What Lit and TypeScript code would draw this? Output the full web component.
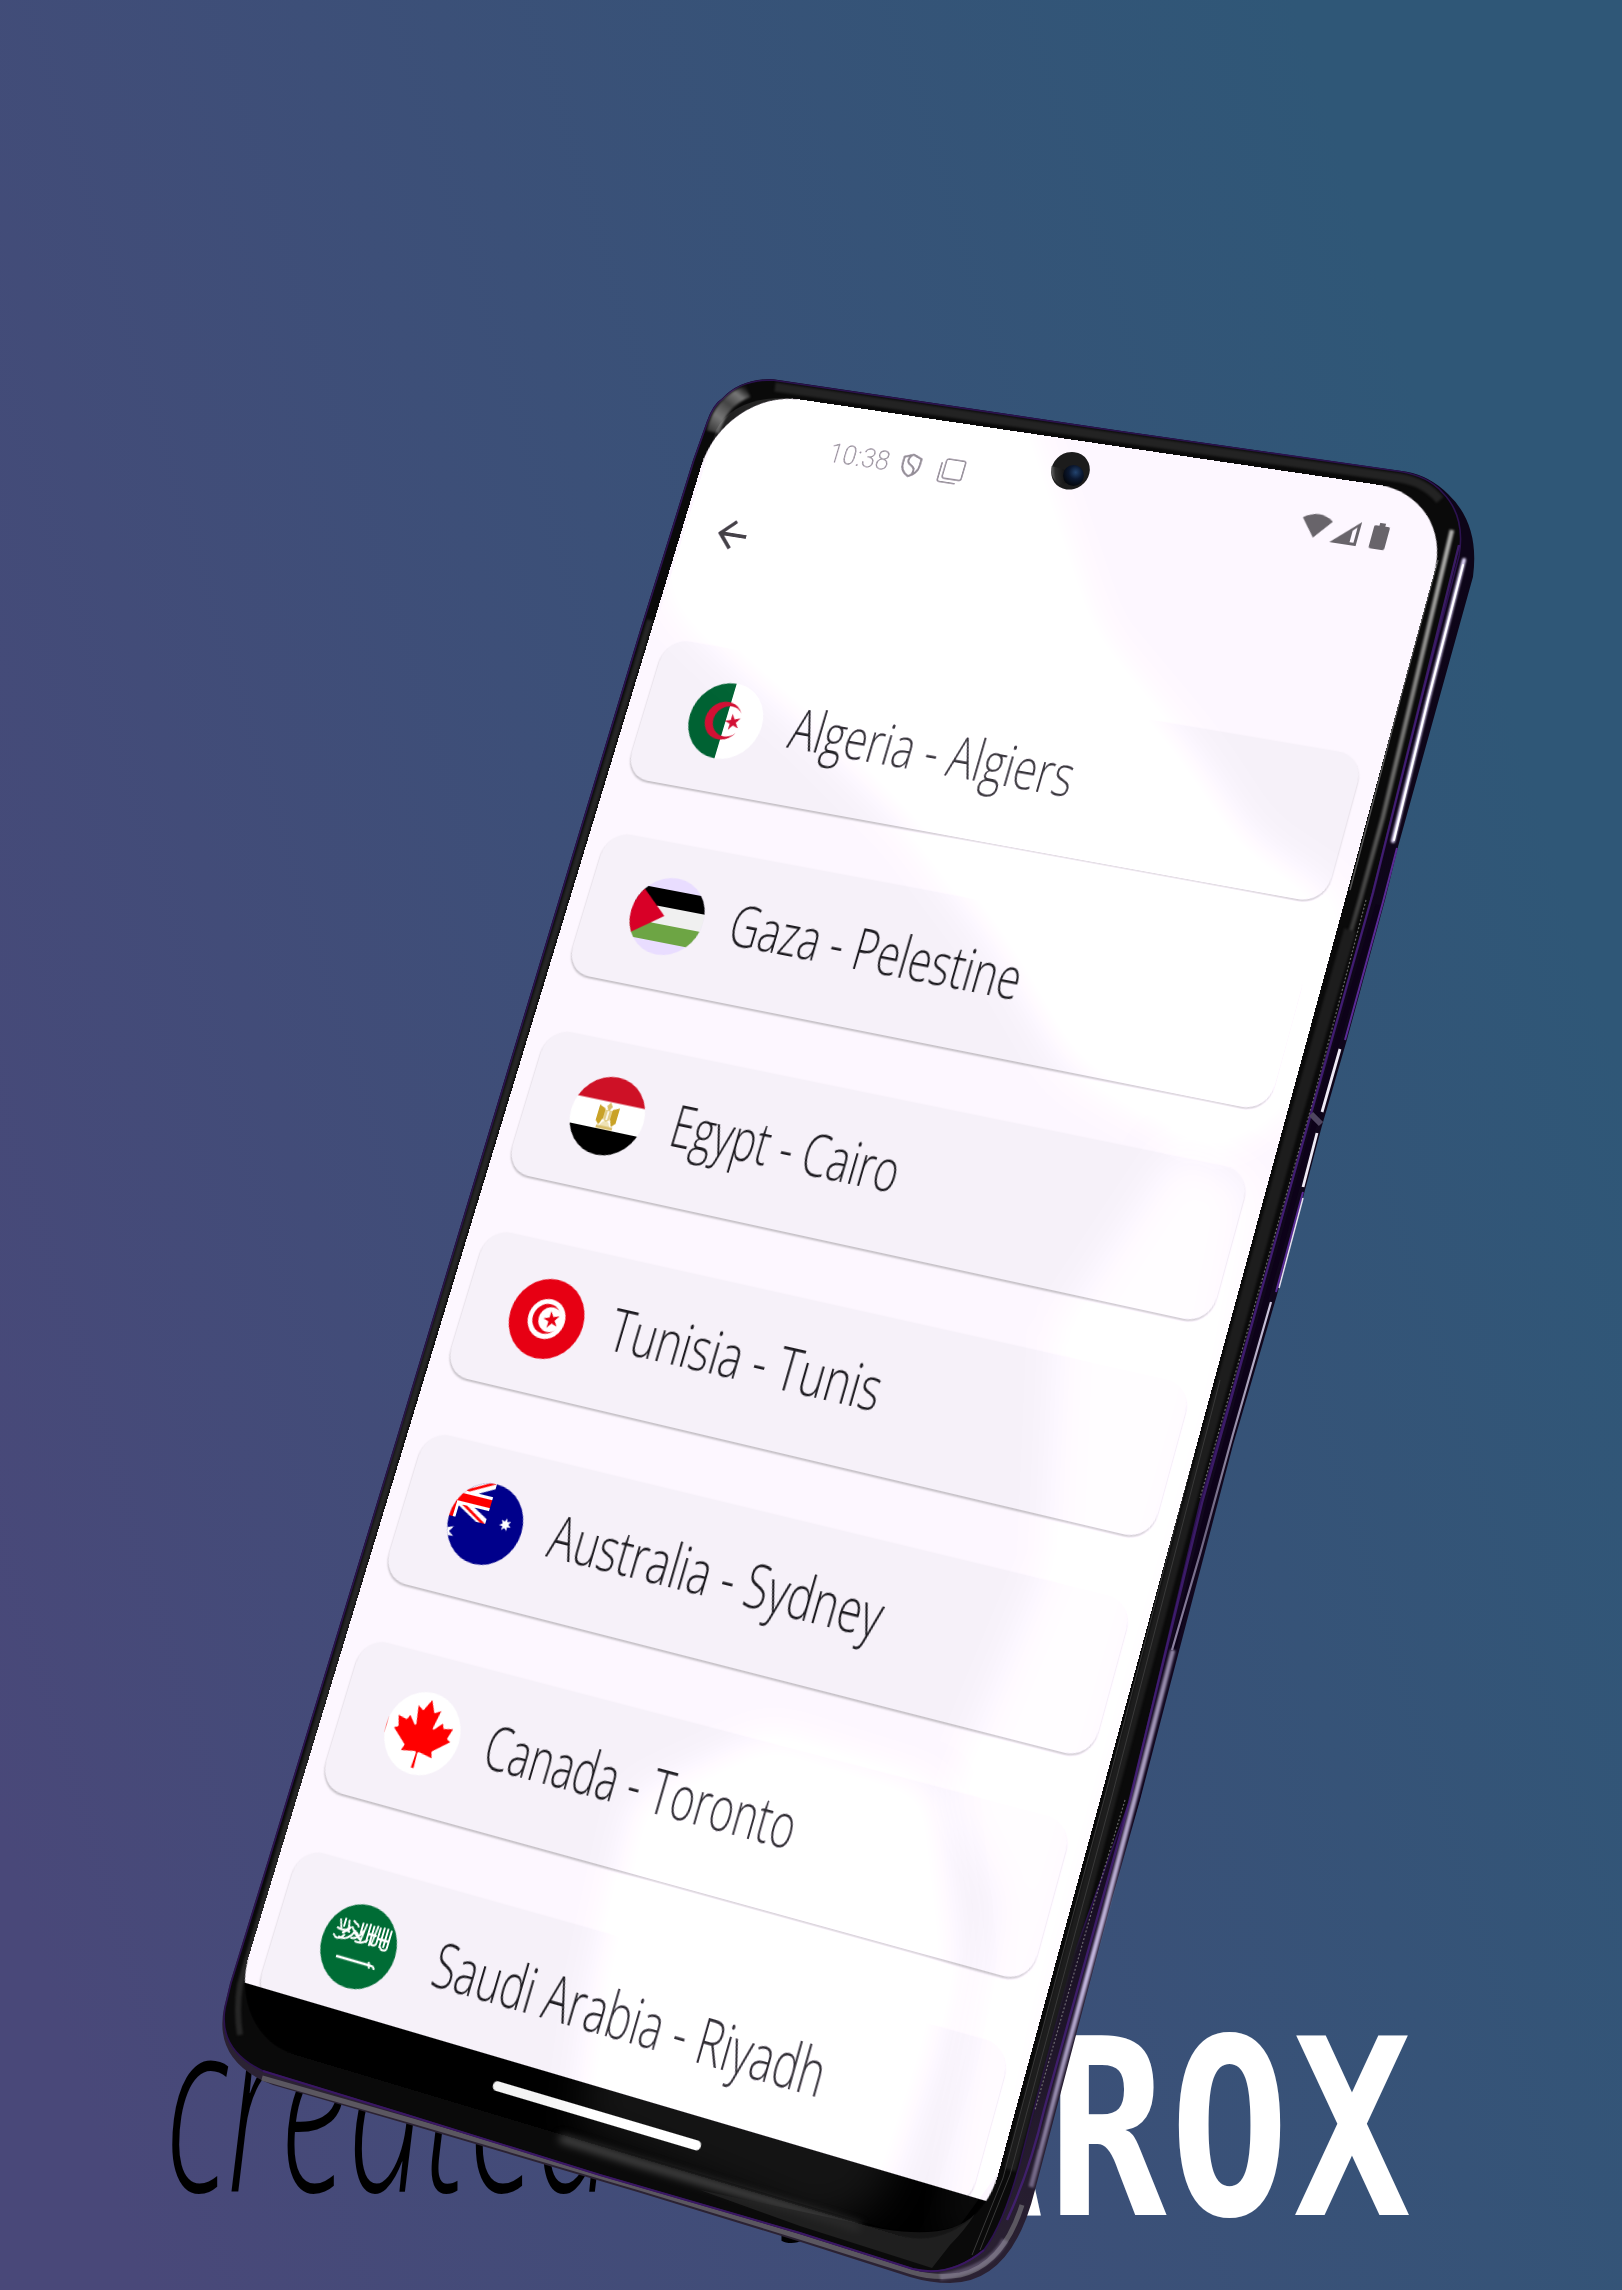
import { LitElement, html, svg, css, SVGTemplateResult } from 'lit';
import { customElement, property } from 'lit/decorators.js';
import { styleMap } from 'lit/directives/style-map.js';

type Pt = [number, number];

const SCREEN_W = 786;
const APP_H = 1660;

/** Projects a flat w×h rectangle onto the quad TL, TR, BR, BL. */
function project(w: number, h: number, q: [Pt, Pt, Pt, Pt]): string {
  const [[x0, y0], [x1, y1], [x2, y2], [x3, y3]] = q;
  const dx1 = x1 - x2, dx2 = x3 - x2, dx3 = x0 - x1 + x2 - x3;
  const dy1 = y1 - y2, dy2 = y3 - y2, dy3 = y0 - y1 + y2 - y3;
  const den = dx1 * dy2 - dx2 * dy1;
  const g = (dx3 * dy2 - dx2 * dy3) / den;
  const k = (dx1 * dy3 - dx3 * dy1) / den;
  const m = [
    (x1 - x0 + g * x1) / w, (y1 - y0 + g * y1) / w, 0, g / w,
    (x3 - x0 + k * x3) / h, (y3 - y0 + k * y3) / h, 0, k / h,
    0, 0, 1, 0,
    x0, y0, 0, 1,
  ];
  return `matrix3d(${m.map((n) => n.toFixed(9)).join(',')})`;
}

const TILT = project(SCREEN_W, APP_H, [
  [724.8, 388.4],
  [1455, 496.1],
  [990.5, 2202.3],
  [241.1, 1981.6],
]);

function star(cx: number, cy: number, r: number, n = 5, inner = 0.38, rot = -90): string {
  const pts: string[] = [];
  for (let i = 0; i < n * 2; i++) {
    const a = ((rot + (i * 180) / n) * Math.PI) / 180;
    const rr = i % 2 ? r * inner : r;
    pts.push(`${(cx + rr * Math.cos(a)).toFixed(2)},${(cy + rr * Math.sin(a)).toFixed(2)}`);
  }
  return pts.join(' ');
}

const FLAGS: Record<string, SVGTemplateResult> = {
  dz: svg`<rect width="40" height="80" fill="#006233"/><rect x="40" width="40" height="80" fill="#fff"/>
    <path d="M54.5 29.5A20 20 0 1 0 54.5 50.500A16 16 0 1 1 54.500 29.500Z" fill="#d21034"/>
    <polygon points=${star(48, 40, 9, 5, 0.38, 180)} fill="#d21034"/>`,
  ps: svg`<rect width="80" height="80" fill="#e9ddff"/>
    <rect y="13" width="80" height="18" fill="#000"/><rect y="31" width="80" height="18" fill="#f0f0f0"/>
    <rect y="49" width="80" height="18" fill="#6da544"/><path d="M0 10L37 40L0 67Z" fill="#d80027"/>`,
  eg: svg`<rect width="80" height="80" fill="#fff"/><rect width="80" height="25.500" fill="#ce1126"/>
    <rect y="54" width="80" height="26" fill="#000"/>
    <g fill="#c9a227"><path d="M29 30l7 3v10l-3 7-4-4z"/><path d="M51 30l-7 3v10l3 7 4-4z"/>
    <path d="M40 26l3 4-2 4h-2l-2-4z" opacity=".7"/><path d="M36 34h8v9l-4 4-4-4z" fill="#e3cf8c"/>
    <rect x="39.200" y="35" width="1.600" height="9" fill="#fff"/><path d="M37 46h6l3 5H34z" fill="#efe2b5"/><rect x="31" y="50.500" width="18" height="3" fill="#d8bd6a"/></g>`,
  tn: svg`<rect width="80" height="80" fill="#e70013"/><circle cx="40" cy="40" r="20" fill="#fff"/>
    <circle cx="40" cy="40" r="15" fill="#e70013"/><circle cx="44" cy="40" r="12.500" fill="#fff"/>
    <polygon points=${star(45.5, 40, 9, 5, 0.38, 180)} fill="#e70013"/>`,
  au: svg`<rect width="80" height="80" fill="#00008b"/>
    <svg x="-40" y="0" width="80" height="40" viewBox="0 0 80 40">
      <path d="M0 0L80 40M80 0L0 40" stroke="#fff" stroke-width="9"/>
      <path d="M40 20L80 41.500M40 18.500L80 -1.500M40 20L0 -1.500M40 20L0 41.500" stroke="#f00" stroke-width="2.600"/>
      <path d="M40 0V40M0 20H80" stroke="#fff" stroke-width="14"/>
      <path d="M40 0V40M0 20H80" stroke="#f00" stroke-width="8"/></svg>
    <polygon points=${star(0, 56, 11, 7, 0.45)} fill="#fff"/>
    <polygon points=${star(61, 36, 6.5, 7, 0.5)} fill="#fff"/>`,
  ca: svg`<rect width="80" height="80" fill="#fff"/>
    <path transform="translate(-40 0) scale(.016667)" fill="#f00" d="m4890 4430-45-863a95 95 0 0 1 111-98l859 151-116-320a65 65 0 0 1 20-73l941-762-212-99a65 65 0 0 1-34-79l186-572-542 115a65 65 0 0 1-73-38l-105-247-423 454a65 65 0 0 1-111-57l204-1052-327 189a65 65 0 0 1-91-27l-332-652-332 652a65 65 0 0 1-91 27l-327-189 204 1052a65 65 0 0 1-111 57l-423-454-105 247a65 65 0 0 1-73 38l-542-115 186 572a65 65 0 0 1-34 79l-212 99 941 762a65 65 0 0 1 20 73l-116 320 859-151a95 95 0 0 1 111 98l-45 863z"/>
    <path d="M0 32v16" stroke="#f00" stroke-width="1"/>`,
  sa: svg`<rect width="80" height="80" fill="#006c35"/>
    <g fill="none" stroke="#fff" stroke-width="2" stroke-linecap="round">
      <path d="M11 35c3 4 8 3 11-2M14 20l3 8M19 18v7M23 19l2 9M13 28c5 2 9-1 13 1M17 36c6 2 12-2 15-9"/>
      <path d="M28 18c3 3 5 1 6 4M28 24c3 5 7 2 9 8M30 34c4 0 8-3 11-10M38 18v9M42 18l-2 16M35 36c5 1 9-1 12-4"/>
      <path d="M46 17v17M50 18v18M54 17l-2 18M57 18v14c0 4-5 4-6 2M61 17v18M65 17v17M69 18v16c0 4-6 4-7 1"/>
      <path d="M47 26h7M59 28h8M33 29l6 4M20 31l6-6" stroke-width="2.600"/></g>
    <path d="M20 54h38" stroke="#fff" stroke-width="2.600"/><path d="M55 51l2 6M58 54c3 0 4 1 4 3" stroke="#fff" stroke-width="2" fill="none"/>`,
};

@customElement('city-card')
class CityCard extends LitElement {
  @property() flag = '';
  @property() label = '';
  @property({ type: Number }) start = 0;
  @property({ type: Number }) span = 0;

  static styles = css`
    :host { display: block; flex: none; }
    .card {
      display: flex; align-items: center; height: 150px; box-sizing: border-box;
      padding-left: 50px; border-radius: 26px; background: #f6f1f9;
      box-shadow: 0 2px 2px rgba(0, 0, 0, 0.2), 0 1px 3px rgba(0, 0, 0, 0.06);
    }
    .avatar { width: 80px; height: 80px; border-radius: 50%; flex: none; margin-right: 27px; overflow: hidden; }
    .name { flex: 1; height: 150px; overflow: visible; }
    text { font-family: 'Open Sans', 'Noto Sans', sans-serif; font-weight: 300; font-size: 58px; fill: #1d1b20; }
  `;

  render() {
    return html`<div class="card">
      <svg class="avatar" viewBox="0 0 80 80">${FLAGS[this.flag]}</svg>
      <svg class="name"><text x=${this.start} y="91" textLength=${this.span} lengthAdjust="spacingAndGlyphs">${this.label}</text></svg>
    </div>`;
  }
}

@customElement('app-root')
class AppRoot extends LitElement {
  static styles = css`
    :host { display: block; }
    .stage {
      position: relative; width: 1622px; height: 2290px; overflow: hidden; isolation: isolate;
      background: linear-gradient(73deg, rgb(73, 72, 121) 6%, rgb(47, 87, 119) 86%);
    }
    .layer { position: absolute; left: 0; top: 0; width: 1622px; height: 2290px; display: block; }
    .glare { mix-blend-mode: plus-lighter; }
    .hand { font-family: 'Open Sans', sans-serif; font-style: italic; font-weight: 300; fill: #000; }
    .mark { font-family: 'DejaVu Sans Mono', monospace; font-weight: 700; fill: #fff; }
    .screen {
      position: absolute; left: 0; top: 0; width: 786px; height: 1711px;
      transform-origin: 0 0; border-radius: 86px 78px 76px 76px; overflow: hidden;
      display: flex; flex-direction: column; background: #000;
    }
    .app {
      height: 1660px; flex: none; display: flex; flex-direction: column; overflow: hidden; background: #fdf7ff;
    }
    .status { display: flex; align-items: center; height: 102px; flex: none; padding: 0 55px 0 134px; }
    .status .spacer { flex: 1; }
    .time { width: 67px; height: 30px; overflow: visible; }
    .time text { font-family: Roboto, sans-serif; font-size: 30px; font-weight: 300; fill: #77727a; }
    .shield { width: 24px; height: 27px; margin-left: 12px; }
    .copy { width: 29px; height: 29px; margin-left: 18px; }
    .wifi { width: 31px; height: 26px; }
    .signal { width: 27px; height: 26px; margin: 4px 0 0 2px; }
    .battery { width: 16px; height: 27px; margin-left: 13px; }
    .toolbar { display: flex; align-items: center; height: 102px; flex: none; padding-left: 32px; }
    .back { width: 48px; height: 48px; }
    .list { display: flex; flex-direction: column; gap: 58.7px; padding: 66.600px 19px 0 19px; }
    .nav { flex: 1; display: flex; align-items: center; justify-content: center; }
    .pill { width: 218px; height: 9px; border-radius: 5px; background: #f4f4f4; }
  `;

  private cities = [
    { flag: 'dz', label: 'Algeria - Algiers', from: 181, to: 486 },
    { flag: 'ps', label: 'Gaza - Pelestine', from: 179, to: 491 },
    { flag: 'eg', label: 'Egypt - Cairo', from: 180, to: 424 },
    { flag: 'tn', label: 'Tunisia - Tunis', from: 179, to: 468 },
    { flag: 'au', label: 'Australia - Sydney', from: 180, to: 532 },
    { flag: 'ca', label: 'Canada - Toronto', from: 178, to: 506 },
    { flag: 'sa', label: 'Saudi Arabia - Riyadh', from: 191, to: 600 },
  ];

  private body() {
    return html`<svg class="layer" viewBox="0 0 1622 2290">
      <defs>
        <linearGradient id="rim" gradientUnits="userSpaceOnUse" x1="1470" y1="560" x2="960" y2="2280">
          <stop offset="0" stop-color="#0d0518"/><stop offset=".7" stop-color="#12081f"/><stop offset="1" stop-color="#2b2233"/>
        </linearGradient>
        <linearGradient id="tl" gradientUnits="userSpaceOnUse" x1="706" y1="440" x2="745" y2="388">
          <stop offset="0" stop-color="#111"/><stop offset=".4" stop-color="#777"/><stop offset=".65" stop-color="#444"/>
          <stop offset=".85" stop-color="#777"/><stop offset="1" stop-color="#151515"/>
        </linearGradient>
        <linearGradient id="lilac" gradientUnits="userSpaceOnUse" x1="1270" y1="1300" x2="1030" y2="2200">
          <stop offset="0" stop-color="#cfc8e0"/><stop offset=".25" stop-color="#6d6480"/><stop offset=".5" stop-color="#a79bbd"/>
          <stop offset=".75" stop-color="#c5b9e0"/><stop offset="1" stop-color="#6a5f7c"/>
        </linearGradient>
        <linearGradient id="sheen" gradientUnits="userSpaceOnUse" x1="1453" y1="520" x2="1330" y2="1000">
          <stop offset="0" stop-color="#b5b5b2"/><stop offset=".5" stop-color="#6e6e6c"/><stop offset="1" stop-color="#222"/>
        </linearGradient>
        <filter id="soft1" filterUnits="userSpaceOnUse" x="0" y="0" width="1622" height="2290" color-interpolation-filters="sRGB"><feGaussianBlur stdDeviation="1"/></filter>
      </defs>
      <path fill="url(#rim)" d="M640 630L693 460L706.700 421.700Q713 404 722 398.500Q740 379 771.700 379L1120 430.700L1406.700 471.700Q1430 476 1448 494Q1480 524 1473 576.700L1398 846.700L1385 900L1346.700 1040.600L1321.700 1126.700L1305 1190L1276.700 1296L1233 1445L1140 1800L1111.700 1900L1035 2190Q1012 2283 950 2283Q930 2283 910 2277L800 2241.700L640 2192.700L416.700 2126.700L273 2085Q213 2062 224 2008L230 1983L268 1860L396 1440Z"/>
      <path fill="none" stroke="#5b5760" stroke-width="5" d="M262 2078L416 2122L640 2188L800 2237L912 2272Q935 2279 960 2275Q1003 2265 1022 2205"/>
      <path fill="none" stroke="#a79bbd" stroke-opacity=".35" stroke-width="7" filter="url(#soft1)" d="M940 2277Q990 2270 1005 2240"/>
      <path fill="#0a0a0a" stroke="#2c1250" stroke-width="1.600" d="M641 630L694 460L707.500 422Q714 404 723 399Q740 380 772 380L1120 431.500L1400 471.500Q1428 476 1442 492Q1466 516 1459 556L1420 705L1370 903L1325 1062L1281 1221L1200 1503L1130 1800L1073 1957L1019 2167Q1003 2225 984 2250Q950 2278 913 2269L800 2233L600 2175L407 2115L263 2071Q218 2050 225 2008L231 1983L269 1860L397 1440Z"/>
      <path fill="none" stroke="#232323" stroke-width="9" filter="url(#soft1)" d="M775 387L1120 438L1400 478Q1425 482 1440 500"/>
      <path fill="none" stroke="#262626" stroke-width="6" filter="url(#soft1)" d="M650 620L401 1440L276 1860L240 1985Q236 2010 240 2035"/>
      <path fill="none" stroke="url(#tl)" stroke-width="13" filter="url(#soft1)" d="M713 432Q720 402 748 391"/>
      <path fill="none" stroke="url(#sheen)" stroke-width="4.500" filter="url(#soft1)" d="M1452 530L1413 693L1383 817L1360 900L1325 1020"/>
      <path fill="none" stroke="#555" stroke-width="1.500" d="M1438 560L1400 700L1350 890"/>
      <path fill="none" stroke="#1d1d1d" stroke-width="12" filter="url(#soft1)" d="M1350 930L1295 1120L1200 1465L1110 1800L1080 1915L1010 2170"/>
      <path fill="none" stroke="#393939" stroke-width="1" d="M1220 1380L1111 1800L1084 1900L1010 2175L980 2250M1195 1450L1104 1800L1077 1900L1003 2178L972 2255"/>
      <path fill="none" stroke="#8f8f8f" stroke-opacity=".7" stroke-width="1.200" stroke-dasharray="2 2" d="M1366 900L1313 1101L1200 1498M1125 1800L1095 1900L1035 2110"/>
      <path fill="none" stroke="#4a2280" stroke-opacity=".75" stroke-width="2.400" d="M1459 545L1420 703L1373 893L1280 1224L1202 1503L1129 1803L1100 1908L1044 2110Q1030 2170 1007 2220"/>
      <path fill="none" stroke="#0d0219" stroke-width="5" d="M1378 905L1330 1066L1285 1232L1209 1503L1137 1800L1105 1908L1040 2150"/>
      <path fill="none" stroke="#e6dcff" stroke-width="4" stroke-linecap="round" filter="url(#soft1)" d="M1464 560L1428 700L1393 841"/>
      <path fill="none" stroke="#fff" stroke-width="2" stroke-linecap="round" d="M1463 565L1428 700L1394 840"/>
      <path fill="none" stroke="#5a2b96" stroke-width="2" d="M1397 848L1383 902L1345 1040M1303 1192L1276 1292"/>
      <path fill="none" stroke="#eeeaf5" stroke-width="2.800" d="M1340 1049L1322 1112M1317 1133L1303 1187"/>
      <path fill="none" stroke="#e5e0f0" stroke-width="1.500" d="M1303 1198L1279 1288"/>
      <path fill="none" stroke="#4f4660" stroke-width="6" d="M1311 1114L1321 1124"/>
      <path fill="none" stroke="url(#lilac)" stroke-width="2.200" d="M1271 1302L1233 1434L1200 1554L1172 1650"/>
      <path fill="none" stroke="url(#lilac)" stroke-width="5" filter="url(#soft1)" d="M1173 1650L1137 1790L1104 1915L1063 2065L1031 2187"/>
      <path fill="none" stroke="#3a1763" stroke-width="2" d="M263 2071L407 2115L600 2175L800 2233L913 2269Q950 2278 984 2250"/>
    </svg>`;
  }

  private glare() {
    return html`<svg class="layer glare" viewBox="0 0 1622 2290">
      <defs>
        <filter id="wide" filterUnits="userSpaceOnUse" x="0" y="0" width="1622" height="2290" color-interpolation-filters="sRGB"><feGaussianBlur stdDeviation="26"/></filter>
        <filter id="mid" filterUnits="userSpaceOnUse" x="0" y="0" width="1622" height="2290" color-interpolation-filters="sRGB"><feGaussianBlur stdDeviation="20"/></filter>
        <filter id="thin" filterUnits="userSpaceOnUse" x="0" y="0" width="1622" height="2290" color-interpolation-filters="sRGB"><feGaussianBlur stdDeviation="4"/></filter>
        <clipPath id="face"><path d="M716 430Q735 396 790 398L1375 485Q1440 497 1434 573L1345 900L1100 1800L998 2173L960 2225Q930 2236 883 2228L507 2117L307 2055Q245 2030 247 1983L533 1020Z"/></clipPath>
      </defs>
      <g clip-path="url(#face)">
        <path fill="#1c1c1c" filter="url(#wide)" d="M710 340L990 370L1040 520L1080 640L1180 760L1240 850L1330 910L1290 1080L1220 1140L1080 1060L1010 940L920 820L820 720L740 650L680 590L700 480Z"/>
        <path fill="#0c0c0c" filter="url(#mid)" d="M1180 1150L1250 1190L1210 1400L1130 1680L1040 2000L990 2240L940 2240L1000 1900L950 1800L1050 1560L1060 1330Z"/>
        <path fill="#141414" filter="url(#mid)" d="M640 1800L770 1740L930 1790L950 1960L930 2050L880 2200L820 2230L580 2130L600 1980Z"/>
      </g>
      <path fill="none" stroke="#4a4a4a" stroke-width="7" filter="url(#thin)" d="M560 2138L640 2163L800 2210L860 2228"/>
      <path fill="#1a1a1a" d="M883 2229Q950 2240 975 2214Q965 2230 950 2245L932 2268L800 2226L700 2190Z" opacity=".8"/>
    </svg>`;
  }

  render() {
    return html`<div class="stage">
      <svg class="layer" viewBox="0 0 1622 2290">
        <g transform="translate(165 2192) scale(1 1.300)">
          <text class="hand" font-size="186" textLength="450" lengthAdjust="spacingAndGlyphs">created</text>
          <text class="hand" x="540" font-size="160" textLength="165" lengthAdjust="spacingAndGlyphs">by</text>
        </g>
        ${['A', 'R', 'O', 'X'].map((ch, i) => svg`<text class="mark" x=${925 + i * 122.5} y="2215" font-size="246" textLength="119" lengthAdjust="spacingAndGlyphs">${ch}</text>`)}
      </svg>
      ${this.body()}
      <div class="screen" style=${styleMap({ transform: TILT })}>
        <div class="app">
          <div class="status">
            <svg class="time"><text x="0" y="25" textLength="67" lengthAdjust="spacingAndGlyphs">10:38</text></svg>
            <svg class="shield" viewBox="0 0 22 26" fill="none" stroke="#77727a" stroke-width="2.400">
              <path d="M11 2L20 5.500V12C20 18 16.500 22 11 24.500C5.500 22 2 18 2 12V5.500Z"/><path d="M9 3C5 9 7 11 11 13S16 17 14 22"/>
            </svg>
            <svg class="copy" viewBox="0 0 28 28" fill="none" stroke="#77727a" stroke-width="1.800">
              <rect x="6" y="2" width="20" height="20" rx="2"/><path d="M2 6V24Q2 26 4 26H21"/>
            </svg>
            <span class="spacer"></span>
            <svg class="wifi" viewBox="0 0 31 26"><path fill="#68646a" d="M0 6Q15.500 -5 31 6L15.500 25Z"/></svg>
            <svg class="signal" viewBox="0 0 27 26"><path fill="#68646a" fill-rule="evenodd" d="M27 0V25H0ZM20 10V22H24V6Z"/></svg>
            <svg class="battery" viewBox="0 0 16 27"><path fill="#68646a" d="M5 0H11V3H14.500Q16 3 16 4.500V25Q16 27 14 27H2Q0 27 0 25V4.500Q0 3 1.500 3H5Z"/></svg>
          </div>
          <div class="toolbar">
            <svg class="back" viewBox="0 0 24 24"><path fill="#2a272d" d="M20 11H7.830l5.590-5.590L12 4l-8 8 8 8 1.410-1.410L7.830 13H20v-2z"/></svg>
          </div>
          <div class="list">
            ${this.cities.map((c) => html`<city-card flag=${c.flag} label=${c.label} .start=${c.from - 176} .span=${c.to - c.from}></city-card>`)}
          </div>
        </div>
        <div class="nav"><div class="pill"></div></div>
      </div>
      ${this.glare()}
      <svg class="layer" viewBox="0 0 1622 2290">
        <defs><radialGradient id="lens" cx=".6" cy=".35" r=".65"><stop offset="0" stop-color="#23446f"/><stop offset=".5" stop-color="#0b1830"/><stop offset="1" stop-color="#04070d"/></radialGradient>
        <linearGradient id="ring" x1="0" y1=".55" x2="1" y2=".45"><stop offset="0" stop-color="#6a6a6a"/><stop offset=".3" stop-color="#2c2c2c"/><stop offset="1" stop-color="#111"/></linearGradient></defs>
        <ellipse cx="1070.500" cy="470.800" rx="19.800" ry="18.300" transform="rotate(-35 1070.500 470.800)" fill="#1c1c1c"/>
        <path d="M1051.500 466L1066 470L1066 483L1059 485Q1050 478 1051.500 466Z" fill="url(#ring)"/>
        <circle cx="1073.500" cy="475.500" r="10.500" fill="url(#lens)"/>
      </svg>
    </div>`;
  }
}
